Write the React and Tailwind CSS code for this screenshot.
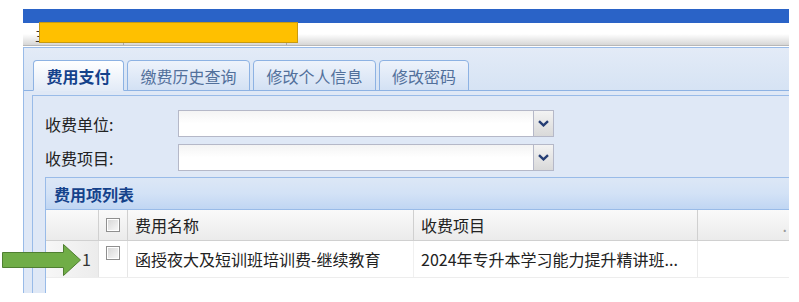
const tabs = [
  { label: '费用支付', w: 'w-[91px]', active: true },
  { label: '缴费历史查询', w: 'w-[123px]' },
  { label: '修改个人信息', w: 'w-[123px]' },
  { label: '修改密码', w: 'w-[90px]' },
]

function Chevron() {
  return (
    <svg width="11" height="7" viewBox="0 0 11 7">
      <path d="M1 1.2 L5.5 5.4 L10 1.2" fill="none" stroke="#253d74" strokeWidth="2.4" />
    </svg>
  )
}

function Combo() {
  return (
    <div className="flex h-[27px]">
      <div className="w-[356px] h-full border border-[#b5b8c8] bg-gradient-to-b from-[#f4f4f4] via-white to-white" />
      <div className="w-[21px] h-full -ml-px border border-[#b5b8c8] bg-gradient-to-b from-[#f3f3f3] to-[#d9d9d9] flex items-center justify-center">
        <Chevron />
      </div>
    </div>
  )
}

function Checkbox() {
  return (
    <div className="w-[14px] h-[14px] border border-[#8f8f8f] bg-white p-px">
      <div className="w-full h-full bg-gradient-to-br from-[#d8d8d8] to-[#f7f7f7]" />
    </div>
  )
}

function Toolbar() {
  return (
    <div className="h-[23px] bg-gradient-to-b from-white via-white to-[#d6d6d6] border-b border-[#b7b7b7] flex items-end text-[15px] leading-none text-[#333]">
      <span className="ml-[12px] mb-[3px]">主页</span>
      <div className="ml-[58px] w-px h-[4px] bg-[#aaa]" />
      <div className="ml-[162px] w-px h-[4px] bg-[#aaa]" />
    </div>
  )
}

export default function App() {
  return (
    <div className="relative w-[799px] h-[302px] bg-white overflow-hidden font-['Noto_Sans_CJK_SC','Liberation_Sans',sans-serif] text-[#222]">
      <div className="pt-[9px] pl-[23px] w-[789px]">
        <div className="h-[14px] bg-[#2a63c7]" />
        <Toolbar />

        <div className="mt-px h-[246px] overflow-hidden border-l border-t border-[#99bbe8] bg-[#dfe8f6]">
          {/* tab strip */}
          <div className="pt-[12px] pl-[9px] flex gap-[3px] border-b border-[#8db2e3] bg-gradient-to-b from-[#e3ebf7] to-[#d6e3f4]">
            {tabs.map((t) => (
              <div
                key={t.label}
                className={`${t.w} h-[31px] -mb-px rounded-t-[4px] border border-[#8db2e3] flex items-center justify-center text-[16px] leading-none ${
                  t.active
                    ? 'font-bold text-[#15428b] bg-gradient-to-b from-white to-[#e3ebf7] border-b-[#e3ebf7]'
                    : 'text-[#52709b] bg-gradient-to-b from-[#eef3fb] to-[#d3e1f4]'
                }`}
              >
                {t.label}
              </div>
            ))}
          </div>
          <div className="h-[4px] bg-[#dfe8f6]" />

          {/* tab body */}
          <div className="ml-[8px] border-l border-t border-[#99bbe8] bg-[#dfe8f6] h-full">
            <div className="pl-[12px] pt-[14px] flex flex-col gap-[7px]">
              <div className="flex items-center">
                <span className="w-[133px] text-[16px] leading-none">收费单位:</span>
                <Combo />
              </div>
              <div className="flex items-center">
                <span className="w-[133px] text-[16px] leading-none">收费项目:</span>
                <Combo />
              </div>
            </div>

            {/* grid panel */}
            <div className="ml-[12px] mt-[6px] border-l border-t border-[#99bbe8] bg-white h-full">
              <div className="h-[32px] border-b border-[#99bbe8] bg-gradient-to-b from-[#dce7f6] via-[#d3e2f6] to-[#c0d6f3] flex items-center pl-[8px]">
                <span className="text-[16px] leading-none font-bold text-[#15428b]">费用项列表</span>
              </div>

              <div className="flex h-[31px] border-b border-[#d0d0d0] bg-gradient-to-b from-[#fafafa] to-[#ebebeb] text-[16px] leading-none">
                <div className="w-[53px] border-r border-[#d0d0d0]" />
                <div className="w-[29px] border-r border-[#d0d0d0] flex items-center justify-center">
                  <Checkbox />
                </div>
                <div className="w-[286px] border-r border-[#d0d0d0] flex items-center pl-[7px]">费用名称</div>
                <div className="w-[284px] border-r border-[#d0d0d0] flex items-center pl-[7px]">收费项目</div>
                <div className="flex-1 flex items-center justify-end pr-[2px] text-[#999]">.</div>
              </div>

              <div className="flex h-[37px] border-b border-[#ededed] text-[16px] leading-none">
                <div className="w-[53px] border-r border-[#e3e3e3] bg-gradient-to-r from-[#f7f7f7] to-[#ececec] flex items-center justify-end pr-[7px] text-[#333]">
                  1
                </div>
                <div className="w-[29px] border-r border-[#e6e6e6] flex items-start justify-center pt-[5px]">
                  <Checkbox />
                </div>
                <div className="w-[286px] border-r border-[#f0f0f0] flex items-center pl-[7px]">
                  函授夜大及短训班培训费-继续教育
                </div>
                <div className="w-[284px] border-r border-[#ececec] flex items-center pl-[7px]">
                  2024年专升本学习能力提升精讲班...
                </div>
                <div className="flex-1" />
              </div>
            </div>
          </div>
        </div>
      </div>

      {/* redaction block */}
      <div className="absolute left-[39px] top-[22px] w-[259px] h-[21px] bg-[#ffc000] border border-[#c79a10]" />

      {/* annotation arrow */}
      <svg className="absolute left-0 top-[243px]" width="84" height="34" viewBox="0 0 84 34">
        <path
          d="M2.5 9.5 H63.5 V1.5 L80.5 17 L63.5 32.5 V24.5 H2.5 Z"
          fill="#70ad47"
          stroke="#4f7f31"
          strokeWidth="1"
        />
      </svg>
    </div>
  )
}
